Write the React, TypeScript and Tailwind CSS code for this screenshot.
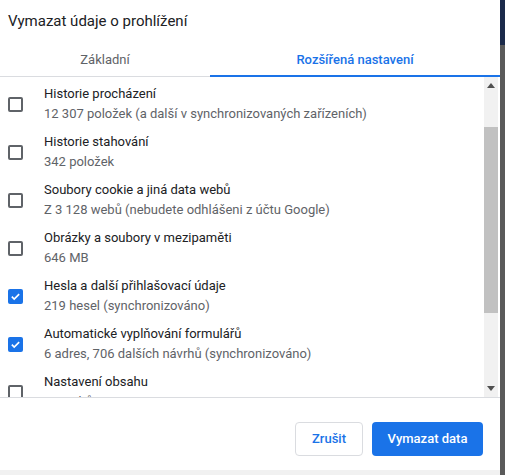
import { useState } from "react";

interface ClearItem {
	title: string;
	detail: string;
	checked: boolean;
}

const Items: ClearItem[] = [
	{ title: "Historie procházení", detail: "12 307 položek (a další v synchronizovaných zařízeních)", checked: false },
	{ title: "Historie stahování", detail: "342 položek", checked: false },
	{ title: "Soubory cookie a jiná data webů", detail: "Z 3 128 webů (nebudete odhlášeni z účtu Google)", checked: false },
	{ title: "Obrázky a soubory v mezipaměti", detail: "646 MB", checked: false },
	{ title: "Hesla a další přihlašovací údaje", detail: "219 hesel (synchronizováno)", checked: true },
	{ title: "Automatické vyplňování formulářů", detail: "6 adres, 706 dalších návrhů (synchronizováno)", checked: true },
	{ title: "Nastavení obsahu", detail: "17 webů", checked: false },
];

function Checkbox({ checked, onClick }: { checked: boolean; onClick: () => void }) {
	if (checked) {
		return (
			<div
				onClick={onClick}
				className="w-[15px] h-[15px] rounded-[2px] bg-[#1a73e8] flex items-center justify-center shrink-0"
			>
				<svg width="11" height="11" viewBox="0 0 12 12">
					<path d="M2 6.2l2.6 2.6L10 3.4" fill="none" stroke="white" strokeWidth="1.8" />
				</svg>
			</div>
		);
	}
	return (
		<div
			onClick={onClick}
			className="w-[15px] h-[15px] rounded-[2px] border-2 border-[#5f6368] shrink-0"
		></div>
	);
}

export default function App() {
	const [items, setItems] = useState(Items);
	const [tab, setTab] = useState(1);

	const toggle = (index: number) => {
		setItems(items.map((item, i) => (i === index ? { ...item, checked: !item.checked } : item)));
	};

	return (
		<div className="w-[505px] h-[475px] flex bg-[#f1f1f1] font-['Roboto',sans-serif] overflow-hidden">
			<div className="w-[500px] h-[470px] bg-white flex flex-col">
				<div className="h-[44px] pl-[8px] pt-[10px] text-[15px] text-[#202124]">
					Vymazat údaje o prohlížení
				</div>
				<div className="flex h-[33px] border-b border-[#dadce0]">
					{["Základní", "Rozšířená nastavení"].map((label, index) => (
						<div
							key={index}
							onClick={() => setTab(index)}
							className={`flex items-center justify-center text-[13px] ${
								index === 0 ? "w-[210px]" : "flex-1"
							} ${
								index === tab
									? "text-[#1a73e8] font-medium border-b-2 border-[#1a73e8] -mb-px pt-[1px]"
									: "text-[#5f6368]"
							}`}
						>
							{label}
						</div>
					))}
				</div>
				<div className="flex h-[321px] border-b border-[#dadce0]">
					<div className="flex-1 overflow-hidden pt-[3px]">
						{items.map((item, index) => (
							<div key={index} className="h-[48px] flex items-center py-1">
								<div className="w-[44px] pl-[8px] flex items-center">
									<Checkbox checked={item.checked} onClick={() => toggle(index)} />
								</div>
								<div className="flex flex-col text-[13px] leading-[20px] whitespace-nowrap">
									<span className="text-[#202124]">{item.title}</span>
									<span className="text-[#5f6368]">{item.detail}</span>
								</div>
							</div>
						))}
					</div>
					<div className="w-[14px] mr-[2px] bg-[#f1f1f1] flex flex-col items-center">
						<div className="h-[17px] flex items-center justify-center">
							<svg width="8" height="5" viewBox="0 0 8 5">
								<path d="M0 5L4 0L8 5Z" fill="#505050" />
							</svg>
						</div>
						<div className="h-[33px]"></div>
						<div className="w-full h-[186px] bg-[#c1c1c1]"></div>
						<div className="flex-1"></div>
						<div className="h-[17px] flex items-center justify-center">
							<svg width="8" height="5" viewBox="0 0 8 5">
								<path d="M0 0L4 5L8 0Z" fill="#505050" />
							</svg>
						</div>
					</div>
				</div>
				<div className="flex-1 flex justify-end items-start gap-[9px] pt-[24px] pr-[17px]">
					<button className="h-[34px] w-[68px] rounded-[4px] border border-[#dadce0] bg-white text-[#1a73e8] text-[13px] font-medium">
						Zrušit
					</button>
					<button className="h-[34px] w-[111px] rounded-[4px] bg-[#1a73e8] text-white text-[13px] font-medium">
						Vymazat data
					</button>
				</div>
			</div>
			<div className="w-[5px] flex flex-col">
				<div className="h-[45px] bg-[#1b2a4a]"></div>
				<div className="flex-1 bg-[#5a5a5a]"></div>
			</div>
		</div>
	);
}
